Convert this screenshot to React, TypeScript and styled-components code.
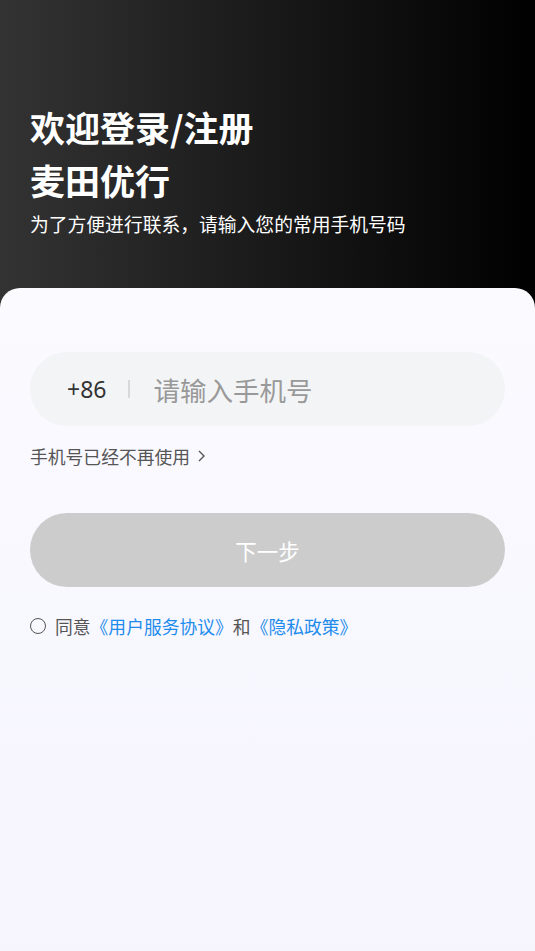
import { useState } from 'react'
import styled, { createGlobalStyle } from 'styled-components'

const GlobalStyle = createGlobalStyle`
  html, body {
    margin: 0;
    padding: 0;
  }
  body {
    font-family: "Noto Sans", "Noto Sans CJK SC", sans-serif;
    background: #f6f5fe;
  }
`

const Page = styled.div`
  min-height: 951px;
  display: flex;
  flex-direction: column;
  background: linear-gradient(90deg, #333333 0%, #000000 100%) top / 100% 320px no-repeat, #f6f5fe;
`

const Header = styled.header`
  height: 288px;
  box-sizing: border-box;
  padding: 100px 30px 0;
  color: #fff;
`

const Title = styled.h1`
  margin: 0;
  font-family: "Noto Sans CJK SC", sans-serif;
  font-size: 35px;
  font-weight: 700;
  line-height: 53px;
`

const Subtitle = styled.p`
  margin: 4px 0 0;
  font-family: "Noto Sans CJK SC", sans-serif;
  font-size: 18.8px;
  line-height: 28px;
`

const Card = styled.main`
  flex: 1;
  border-radius: 20px 20px 0 0;
  background: linear-gradient(180deg, #fafaff 0%, #f6f5fe 100%);
  padding: 64px 30px 0;
  display: flex;
  flex-direction: column;
`

const InputPill = styled.div`
  height: 74px;
  border-radius: 37px;
  background: #f3f4f6;
  display: flex;
  align-items: center;
  padding-left: 37px;
`

const Code = styled.span`
  font-size: 23px;
  color: #333;
`

const Divider = styled.span`
  width: 2px;
  height: 18px;
  background: #d8d8d8;
  margin: 0 23px 0 22px;
`

const PhoneInput = styled.input`
  flex: 1;
  border: none;
  outline: none;
  background: transparent;
  font-family: "Noto Sans CJK SC", sans-serif;
  font-size: 26.5px;
  color: #333;
  padding: 0;
  &::placeholder {
    color: #999;
  }
`

const HelpLink = styled.div`
  margin-top: 17px;
  display: flex;
  align-items: center;
  gap: 6px;
  font-family: "Noto Sans CJK SC", sans-serif;
  font-size: 17.8px;
  line-height: 26px;
  color: #555;
`

const NextButton = styled.button<{ $active: boolean }>`
  margin-top: 44px;
  height: 74px;
  border: none;
  border-radius: 37px;
  background: ${(p) => (p.$active ? '#111' : '#cccccc')};
  color: #fff;
  font-family: "Noto Sans CJK SC", sans-serif;
  font-size: 21.5px;
`

const Agreement = styled.div`
  margin-top: 26px;
  display: flex;
  align-items: center;
  font-family: "Noto Sans CJK SC", sans-serif;
  font-size: 17.8px;
  line-height: 26px;
  color: #555;
`

const Radio = styled.span<{ $checked: boolean }>`
  width: 14px;
  height: 14px;
  border-radius: 50%;
  border: 1.8px solid #555;
  background: ${(p) => (p.$checked ? '#555' : 'transparent')};
  margin-right: 9px;
`

const Link = styled.span`
  color: #1e8cec;
`

const App = () => {
  const [phone, setPhone] = useState('')
  const [agreed, setAgreed] = useState(false)

  return (
    <Page>
      <GlobalStyle />
      <Header>
        <Title>
          欢迎登录/注册
          <br />
          麦田优行
        </Title>
        <Subtitle>为了方便进行联系，请输入您的常用手机号码</Subtitle>
      </Header>
      <Card>
        <InputPill>
          <Code>+86</Code>
          <Divider />
          <PhoneInput
            placeholder="请输入手机号"
            value={phone}
            onChange={(e) => setPhone(e.target.value)}
          />
        </InputPill>
        <HelpLink>
          手机号已经不再使用
          <svg width="10" height="14" viewBox="0 0 10 14" fill="none">
            <path d="M3 2l5 5-5 5" stroke="#555" strokeWidth="1.4" />
          </svg>
        </HelpLink>
        <NextButton $active={phone.length === 11 && agreed}>下一步</NextButton>
        <Agreement onClick={() => setAgreed(!agreed)}>
          <Radio $checked={agreed} />
          同意<Link>《用户服务协议》</Link>和<Link>《隐私政策》</Link>
        </Agreement>
      </Card>
    </Page>
  )
}

export default App
